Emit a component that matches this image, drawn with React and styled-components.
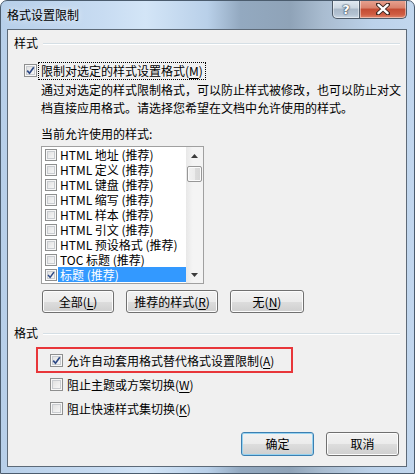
import React from 'react'
import styled, { createGlobalStyle } from 'styled-components'

const GlobalStyle = createGlobalStyle`
  html, body {
    margin: 0;
    padding: 0;
    background: #ffffff;
  }
  body {
    font-family: "Noto Sans CJK SC", "Noto Sans", sans-serif;
    font-size: 12px;
    color: #000;
  }
`

const Window = styled.div`
  width: 415px;
  height: 474px;
  box-sizing: border-box;
  display: flex;
  flex-direction: column;
  border: 1px solid #4b5c6e;
  border-radius: 7px 7px 0 0;
  background:
    linear-gradient(90deg, #b7cfe9 0%, #c8dcf2 25%, #d3e5f7 35%, #b9d0e9 50%, #93a9c0 58%, #8fa3b8 70%, #a9bcd0 78%, #bcd2ea 90%, #c2d7ee 100%);
  overflow: hidden;
`

const TitleBar = styled.div`
  height: 28px;
  flex-shrink: 0;
  display: flex;
  align-items: flex-start;
  padding-left: 6px;
`

const Title = styled.div`
  margin-top: 5px;
  font-size: 12px;
  line-height: 17px;
  color: #000;
  text-shadow: 0 0 6px rgba(255, 255, 255, 0.9);
`

const CaptionButtons = styled.div`
  margin-left: auto;
  margin-right: 7px;
  margin-top: -1px;
  display: flex;
`

const CaptionButton = styled.div`
  width: ${p => p.$w}px;
  height: 19px;
  box-sizing: border-box;
  display: flex;
  align-items: center;
  justify-content: center;
  border: 1px solid #4e5a68;
  border-top: none;
  border-left: ${p => (p.$first ? '1px solid #4e5a68' : 'none')};
  border-radius: ${p => (p.$first ? '0 0 0 5px' : '0 0 5px 0')};
  background: ${p =>
    p.$close
      ? 'linear-gradient(180deg, #e8a493 0%, #d9816b 45%, #c34b33 50%, #cf5c42 80%, #e0866c 100%)'
      : 'linear-gradient(180deg, #e3ebf3 0%, #cbd6e1 45%, #a9b8c8 50%, #b3c2d2 80%, #ccd9e6 100%)'};
  box-shadow: inset 0 0 0 1px rgba(255, 255, 255, 0.45);
`

const HelpGlyph = styled.span`
  font-family: "DejaVu Sans", sans-serif;
  font-weight: bold;
  font-size: 13px;
  color: #fff;
  line-height: 1;
  text-shadow: 0 0 1px #394656, 0 0 1px #394656, 0 0 2px #394656;
`

const Client = styled.div`
  flex: 1;
  min-height: 0;
  margin: 0 7px 6px 6px;
  background: #f0f0f0;
  border: 1px solid #5d6a78;
  display: flex;
  flex-direction: column;
  padding: 5px 6px 0 6px;
`

const GroupHeader = styled.div`
  height: 16px;
  display: flex;
  align-items: center;
  gap: 5px;
  line-height: 16px;
  margin-top: ${p => p.$top || 0}px;
`

const GroupLine = styled.div`
  flex: 1;
  height: 1px;
  background: #d5dfe5;
  box-shadow: 0 1px 0 #ffffff;
`

const Section = styled.div`
  padding-left: 10px;
  display: flex;
  flex-direction: column;
`

const CheckRow = styled.div`
  display: flex;
  align-items: center;
  height: ${p => p.$h || 24}px;
  margin-top: ${p => p.$top || 0}px;
  margin-left: ${p => p.$indent || 0}px;
  gap: ${p => p.$gap || 4}px;
`

const Box = styled.span`
  width: ${p => p.$size}px;
  height: ${p => p.$size}px;
  box-sizing: border-box;
  flex-shrink: 0;
  border: 1px solid #8e8f8f;
  background: linear-gradient(135deg, #dcdcdc 0%, #eeeeee 55%, #fbfbfb 100%);
  box-shadow: inset 0 0 0 1px #f7f7f7, inset 0 0 0 2px #c9ccd0;
  display: flex;
  align-items: center;
  justify-content: center;
`

const FocusLabel = styled.span`
  outline: 1px dotted #000;
  outline-offset: 0;
  padding: 0 2px;
  line-height: 16px;
`

const Key = styled.span`
  text-decoration: underline;
  text-underline-offset: 2px;
`

const Description = styled.div`
  margin: 2px 0 0 17px;
  line-height: 18px;
  white-space: nowrap;
`

const ListLabel = styled.div`
  margin: 8px 0 0 17px;
  line-height: 18px;
`

const ListBox = styled.div`
  margin: 3px 0 0 17px;
  width: 163px;
  height: 138px;
  box-sizing: border-box;
  border: 1px solid #a0a0a0;
  background: #fff;
  display: flex;
`

const Items = styled.div`
  flex: 1;
  display: flex;
  flex-direction: column;
  padding-left: 3px;
`

const Item = styled.div`
  height: 15px;
  display: flex;
  align-items: center;
  gap: 1px;
`

const ItemText = styled.span`
  flex: 1;
  height: 15px;
  line-height: 15px;
  padding-left: 2px;
  white-space: nowrap;
  background: ${p => (p.$selected ? '#3399ff' : 'transparent')};
  color: ${p => (p.$selected ? '#fff' : '#000')};
`

const ScrollBar = styled.div`
  width: 17px;
  background: linear-gradient(90deg, #e8e8e8 0%, #f4f4f4 40%, #f4f4f4 100%);
  display: flex;
  flex-direction: column;
  align-items: center;
`

const Arrow = styled.div`
  height: 17px;
  width: 17px;
  display: flex;
  align-items: center;
  justify-content: center;
`

const Thumb = styled.div`
  width: 15px;
  height: 16px;
  margin-top: 2px;
  box-sizing: border-box;
  border: 1px solid #979797;
  border-radius: 2px;
  background: linear-gradient(90deg, #f2f2f2 0%, #ececec 50%, #dcdcdc 51%, #d6d6d6 100%);
  box-shadow: inset 0 0 0 1px #fbfbfb;
`

const Track = styled.div`
  flex: 1;
`

const ButtonRow = styled.div`
  display: flex;
  gap: 12px;
  margin: ${p => p.$margin};
  justify-content: ${p => p.$justify || 'flex-start'};
`

const Button = styled.div`
  width: ${p => p.$w}px;
  height: ${p => p.$h || 23}px;
  box-sizing: border-box;
  display: flex;
  align-items: center;
  justify-content: center;
  border: 1px solid ${p => (p.$default ? '#3c7fb1' : '#707070')};
  border-radius: 3px;
  background: linear-gradient(180deg, #f2f2f2 0%, #ebebeb 50%, #dddddd 51%, #cfcfcf 100%);
  box-shadow: inset 0 0 0 1px ${p => (p.$default ? '#96d2f0' : '#fcfcfc')};
  line-height: 16px;
`

const Highlight = styled.div`
  margin: 6px 0 0 22px;
  width: 257px;
  height: 26px;
  box-sizing: border-box;
  border: 2px solid #e8363a;
  display: flex;
  align-items: center;
  padding-left: 12px;
  gap: 4px;
`

const Check = ({ size = 13, checked }) => (
  <Box $size={size}>
    {checked && (
      <svg width={size - 4} height={size - 4} viewBox="0 0 9 9">
        <path d="M1.2 4.6 L3.5 7.2 L7.8 1.2" fill="none" stroke="#2e4a86" strokeWidth="1.7" />
      </svg>
    )}
  </Box>
)

const styles = [
  'HTML 地址 (推荐)',
  'HTML 定义 (推荐)',
  'HTML 键盘 (推荐)',
  'HTML 缩写 (推荐)',
  'HTML 样本 (推荐)',
  'HTML 引文 (推荐)',
  'HTML 预设格式 (推荐)',
  'TOC 标题 (推荐)',
  '标题 (推荐)',
]

const App = () => {
  return (
    <>
      <GlobalStyle />
      <Window>
        <TitleBar>
          <Title>格式设置限制</Title>
          <CaptionButtons>
            <CaptionButton $w={28} $first>
              <HelpGlyph>?</HelpGlyph>
            </CaptionButton>
            <CaptionButton $w={47} $close>
              <svg width="14" height="12" viewBox="0 0 14 12">
                <path d="M2 1.5 L12 10.5 M12 1.5 L2 10.5" stroke="#3b2520" strokeWidth="4.2" strokeLinecap="round" />
                <path d="M2.4 1.9 L11.6 10.1 M11.6 1.9 L2.4 10.1" stroke="#ffffff" strokeWidth="2.4" strokeLinecap="round" />
              </svg>
            </CaptionButton>
          </CaptionButtons>
        </TitleBar>
        <Client>
          <GroupHeader>
            <span>样式</span>
            <GroupLine />
          </GroupHeader>
          <Section>
            <CheckRow $h={17} $top={11} $gap={2}>
              <Check checked />
              <FocusLabel>
                限制对选定的样式设置格式(<Key>M</Key>)
              </FocusLabel>
            </CheckRow>
            <Description>
              通过对选定的样式限制格式，可以防止样式被修改，也可以防止对文
              <br />
              档直接应用格式。请选择您希望在文档中允许使用的样式。
            </Description>
            <ListLabel>当前允许使用的样式:</ListLabel>
            <ListBox>
              <Items>
                {styles.map((s, i) => (
                  <Item key={s}>
                    <Check size={12} checked={i === styles.length - 1} />
                    <ItemText $selected={i === styles.length - 1}>{s}</ItemText>
                  </Item>
                ))}
              </Items>
              <ScrollBar>
                <Arrow>
                  <svg width="7" height="4" viewBox="0 0 7 4">
                    <path d="M0 4 L3.5 0 L7 4 Z" fill="#3c3c3c" />
                  </svg>
                </Arrow>
                <Thumb />
                <Track />
                <Arrow>
                  <svg width="7" height="4" viewBox="0 0 7 4">
                    <path d="M0 0 L3.5 4 L7 0 Z" fill="#3c3c3c" />
                  </svg>
                </Arrow>
              </ScrollBar>
            </ListBox>
            <ButtonRow $margin="6px 0 0 18px">
              <Button $w={72}>
                全部(<Key>L</Key>)
              </Button>
              <Button $w={92}>
                推荐的样式(<Key>R</Key>)
              </Button>
              <Button $w={74}>
                无(<Key>N</Key>)
              </Button>
            </ButtonRow>
          </Section>
          <GroupHeader $top={12}>
            <span>格式</span>
            <GroupLine />
          </GroupHeader>
          <Highlight>
            <Check checked />
            <span>
              允许自动套用格式替代格式设置限制(<Key>A</Key>)
            </span>
          </Highlight>
          <CheckRow $indent={36} $top={-1}>
            <Check />
            <span>
              阻止主题或方案切换(<Key>W</Key>)
            </span>
          </CheckRow>
          <CheckRow $indent={36}>
            <Check />
            <span>
              阻止快速样式集切换(<Key>K</Key>)
            </span>
          </CheckRow>
          <ButtonRow $margin="12px 1px 0 0" $justify="flex-end">
            <Button $w={73} $h={24} $default>
              确定
            </Button>
            <Button $w={73} $h={24}>
              取消
            </Button>
          </ButtonRow>
        </Client>
      </Window>
    </>
  )
}

export default App
